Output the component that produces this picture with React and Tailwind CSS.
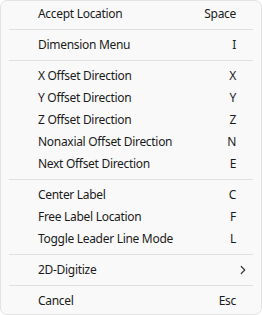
import { ChevronRight } from 'lucide-react';

const groups = [
  [{ label: 'Accept Location', key: 'Space' }],
  [{ label: 'Dimension Menu', key: 'I' }],
  [
    { label: 'X Offset Direction', key: 'X' },
    { label: 'Y Offset Direction', key: 'Y' },
    { label: 'Z Offset Direction', key: 'Z' },
    { label: 'Nonaxial Offset Direction', key: 'N' },
    { label: 'Next Offset Direction', key: 'E' },
  ],
  [
    { label: 'Center Label', key: 'C' },
    { label: 'Free Label Location', key: 'F' },
    { label: 'Toggle Leader Line Mode', key: 'L' },
  ],
  [{ label: '2D-Digitize', submenu: true }],
  [{ label: 'Cancel', key: 'Esc' }],
];

function MenuItem({ item }) {
  return (
    <div className="h-[22px] flex items-center pl-[37px] pr-[25px] text-[12px] tracking-[-0.3px] text-[#1b1b1b] relative">
      <span className="flex-1">{item.label}</span>
      {item.submenu ? (
        <ChevronRight className="absolute right-[11px] top-[4px] h-[14px] w-[14px] text-[#3a3a3a]" strokeWidth={2.1} />
      ) : (
        <span>{item.key}</span>
      )}
    </div>
  );
}

export default function App() {
  return (
    <div
      className="w-[262px] h-[315px] bg-[#f9f9f9] border border-[#e3e3e3] rounded-[7px] pt-[2px] overflow-hidden"
      style={{ fontFamily: '"Noto Sans", "Open Sans", sans-serif' }}
    >
      {groups.map((group, gi) => (
        <div key={gi}>
          {gi > 0 && (
            <div className="h-[9px] flex items-center px-[8px]">
              <div className="h-px w-full bg-[#e0e0e0]" />
            </div>
          )}
          {group.map((item) => (
            <MenuItem key={item.label} item={item} />
          ))}
        </div>
      ))}
    </div>
  );
}
